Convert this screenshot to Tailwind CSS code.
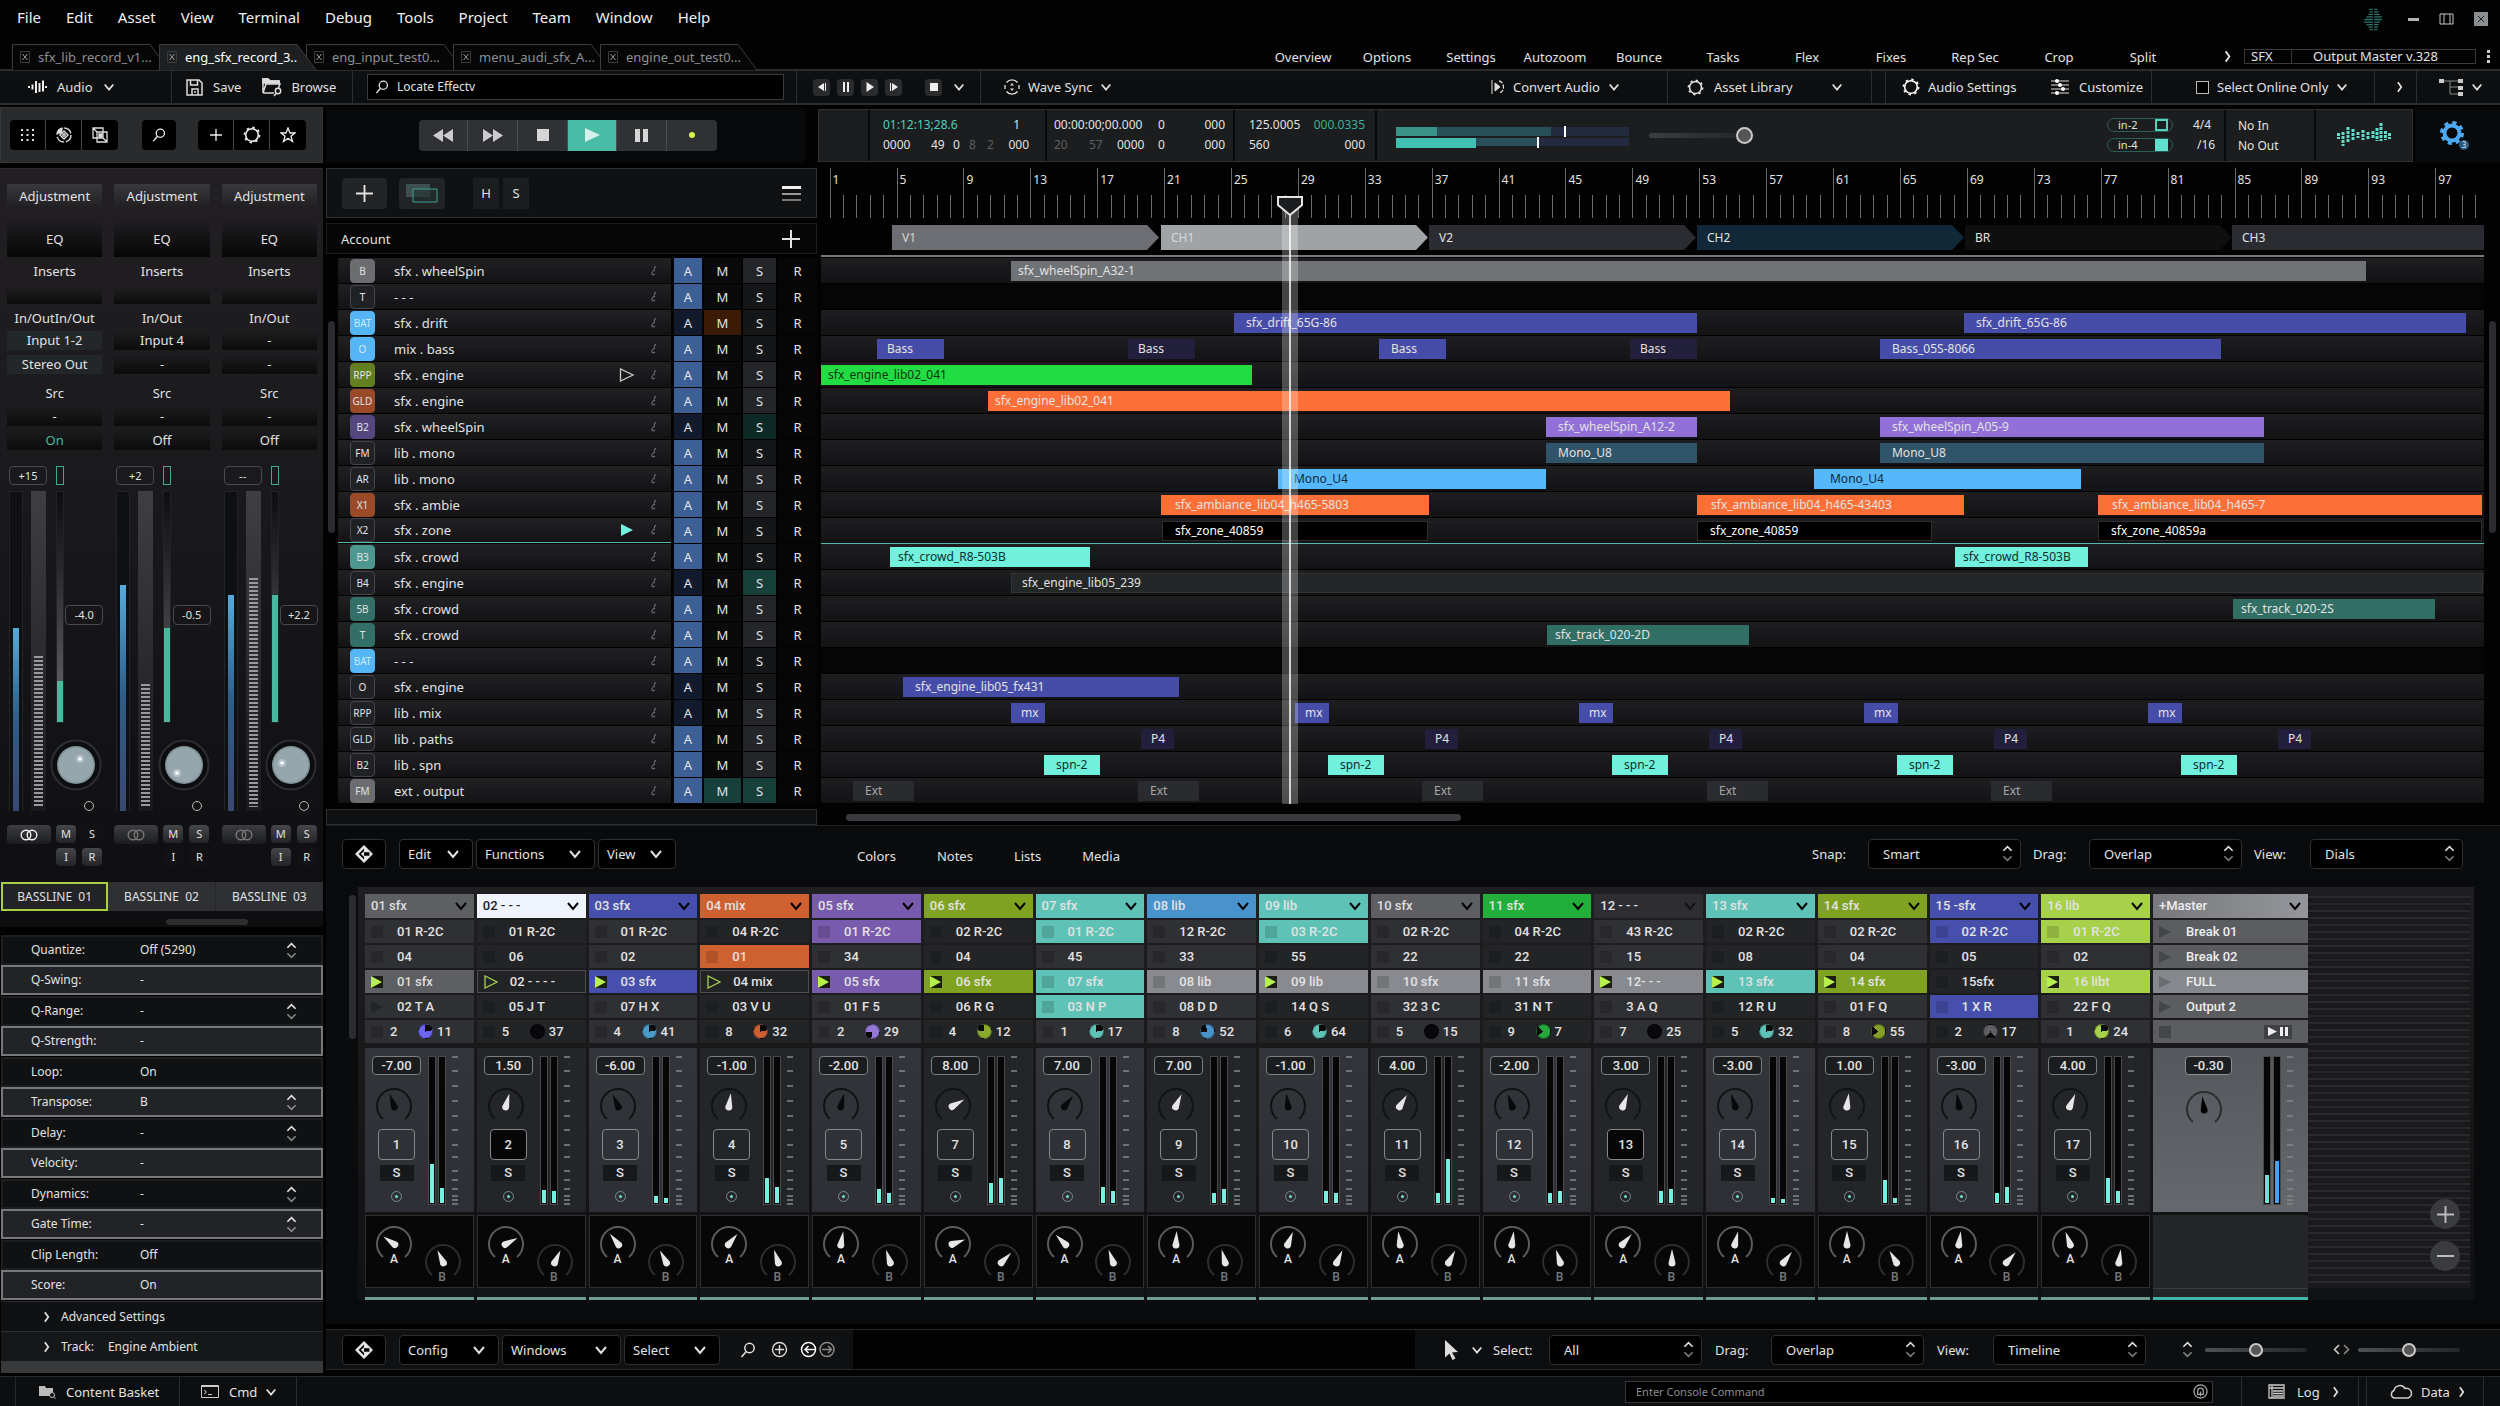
<!DOCTYPE html>
<html lang="en">
<head>
  <meta charset="UTF-8">
  <meta name="viewport" content="width=device-width, initial-scale=1.0">
  <title>SFX Workstation</title>
  <script src="https://cdn.jsdelivr.net/npm/@tailwindcss/browser@4"></script>
</head>

<body class="min-h-screen flex flex-col bg-[#020203] text-[#e2e2e2] text-[13px] leading-4 font-['Noto_Sans',sans-serif] overflow-x-hidden">

  <!-- Icon sprite -->
  <svg class="hidden">
    <symbol id="chev" viewBox="0 0 14 10"><path d="M2 2l5 6 5-6" fill="none" stroke="currentColor" stroke-width="2"/></symbol>
    <symbol id="chev-r" viewBox="0 0 8 14"><path d="M1.500 1.500l4 5.500-4 5.500" fill="none" stroke="currentColor" stroke-width="2"/></symbol>
    <symbol id="updown" viewBox="0 0 12 18"><path d="M1.500 6L6 1.500 10.500 6" fill="none" stroke="currentColor" stroke-width="1.800"/><path d="M1.500 12L6 16.500 10.500 12" fill="none" stroke="currentColor" stroke-opacity=".55" stroke-width="1.800"/></symbol>
    <symbol id="plus" viewBox="0 0 18 18"><path d="M9 0v18M0 9h18" fill="none" stroke="currentColor" stroke-width="2"/></symbol>
    <symbol id="mag" viewBox="0 0 16 16"><circle cx="9.500" cy="6" r="4.700" fill="none" stroke="currentColor" stroke-width="1.500"/><path d="M6.300 9.500L1.500 15" stroke="currentColor" stroke-width="1.600"/></symbol>
    <symbol id="cog" viewBox="0 0 18 18"><circle cx="9" cy="9" r="6.300" fill="none" stroke="currentColor" stroke-width="1.600"/><circle cx="9" cy="9" r="7.600" fill="none" stroke="currentColor" stroke-width="1.600" stroke-dasharray="2.400 3.570"/></symbol>
    <symbol id="diamond" viewBox="0 0 20 20"><path d="M10 0l10 10-10 10L0 10z" fill="#e4e4e4"/><path d="M10 4v4h6v4h-6v4l-6-6z" fill="#000"/><path d="M10 7v6l-3.500-3z" fill="#e4e4e4"/></symbol>
    <symbol id="link" viewBox="0 0 20 12"><circle cx="7" cy="6" r="4.800" fill="none" stroke="currentColor" stroke-width="1.400"/><circle cx="13" cy="6" r="4.800" fill="none" stroke="currentColor" stroke-width="1.400"/></symbol>
  </svg>

  <!-- Menu bar -->
  <header class="flex items-center justify-between h-[42px] pl-[5px] pr-3">
    <nav class="flex gap-px text-[15px] text-[#f0f0f0] pb-2" id="menuBar"></nav>
    <div class="flex items-center gap-5 pb-1">
      <svg class="w-[29px] h-[23px] text-[#2c7469]" viewBox="0 0 32 36" stroke="currentColor" stroke-width="2"><path d="M9 2h6M17 2h5M10 6h5M17 6h7M8 10h7M17 10h9M5 14h10M17 14h12M2 18h13M17 18h12M1 22h14M17 22h9M5 26h10M17 26h7M8 30h7M17 30h6M10 34h5M17 34h5"/></svg>
      <button class="w-[11px] h-[3px] bg-[#b5b5b5]" aria-label="Minimize"></button>
      <button aria-label="Restore" class="block"><svg class="w-[15px] h-3" viewBox="0 0 15 12" fill="none" stroke="#c5c5c5"><path d="M1 1h13v10H1zM5 1v10M11 1v10"/></svg></button>
      <button aria-label="Close" class="block"><svg class="w-[14px] h-[14px]" viewBox="0 0 14 14"><path d="M0 0h14v14H0z" fill="#8b8e90"/><path d="M4 4l6 6M10 4l-6 6" stroke="#222"/></svg></button>
    </div>
  </header>

  <!-- Document tabs -->
  <div class="flex items-end h-[27px] pl-3">
    <div class="flex" id="docTabs"></div>
    <div class="flex-1"></div>
    <div class="flex items-center h-[25px]">
      <div class="flex text-center" id="viewLinks"></div>
      <button class="ml-[39px] mr-3" aria-label="More views"><svg class="w-2 h-[13px]"><use href="#chev-r"/></svg></button>
      <div class="flex border border-[#3a3a3c] h-[15px] leading-[13px] w-[232px]">
        <span class="w-[47px] pl-1.5 border-r border-[#3a3a3c]">SFX</span><span class="flex-1 text-center pr-4">Output Master v.328</span>
      </div>
      <button class="w-6 grid place-items-center gap-0.5" aria-label="More options"><span class="size-[3px] bg-[#ccc]"></span><span class="size-[3px] bg-[#ccc]"></span><span class="size-[3px] bg-[#ccc]"></span></button>
    </div>
  </div>

  <!-- Main toolbar -->
  <div class="flex items-stretch h-9 bg-gradient-to-b from-[#0e1011] to-[#0b0d0e] border-t-2 border-b-2 border-[#2b2c2e]">
    <button class="flex items-center gap-2.5 w-[172px] pl-7 border-r border-[#2c2d2f]">
      <svg class="w-[19px] h-4" viewBox="0 0 19 16" stroke="#eee" stroke-width="2"><path d="M1 7v2M4.500 5.500v5M8 2v12M11.500 4v9M15 1.500v11M18 7v2"/></svg>Audio
      <svg class="w-3 h-2.5"><use href="#chev"/></svg>
    </button>
    <div class="flex items-center w-[181px] pl-[14px] border-r border-[#2c2d2f]">
      <button class="flex items-center gap-2.5"><svg class="w-[17px] h-[17px]" viewBox="0 0 17 17" fill="none" stroke="#ddd" stroke-width="1.500"><path d="M1 1h12l3 3v12H1zM4.500 1v5h7V1M6 16v-6h6v6M9 12v2"/></svg>Save</button>
      <button class="flex items-center gap-2 ml-5"><svg class="w-[22px] h-5" viewBox="0 0 22 20" fill="none" stroke="#ddd" stroke-width="1.500"><path d="M2 16V2h5l2 2h9v3M2 16h11M2 16l3-9h14l-2 5"/><path d="M2 2h5l2 2h9v2H2z" fill="#ddd"/><circle cx="17" cy="14" r="2.700"/><path d="M15.500 16L13 19"/></svg>Browse</button>
    </div>
    <div class="flex items-center pl-[14px] pr-3 w-[444px] border-r border-[#2c2d2f]">
      <label class="flex items-center gap-2 w-full h-[26px] px-[7px] bg-black border border-[#3a3b3d]"><svg class="size-3.5 shrink-0"><use href="#mag"/></svg><input class="flex-1 bg-transparent outline-none text-[12px]" aria-label="Locate" value="Locate Effectv"></label>
    </div>
    <div class="flex items-center gap-[7px] w-[184px] pl-4 border-r border-[#2c2d2f]">
      <button aria-label="Previous" class="w-[17px] h-[17px] rounded bg-[#2a2b2d] grid place-items-center"><svg class="size-2.5" viewBox="0 0 10 10" fill="#eee"><path d="M7 1v8L1 5zM8 1h1v8H8z"/></svg></button>
      <button aria-label="Pause preview" class="w-[17px] h-[17px] rounded bg-[#2a2b2d] grid place-items-center"><svg class="size-2.5" viewBox="0 0 10 10" fill="#eee"><path d="M2 0h2v10H2zM6 0h2v10H6z"/></svg></button>
      <button aria-label="Play preview" class="w-[17px] h-[17px] rounded bg-[#2a2b2d] grid place-items-center"><svg class="size-2.5" viewBox="0 0 10 10" fill="#eee"><path d="M1.500 0v10L9 5z"/></svg></button>
      <button aria-label="Next" class="w-[17px] h-[17px] rounded bg-[#2a2b2d] grid place-items-center"><svg class="size-2.5" viewBox="0 0 10 10" fill="#eee"><path d="M3 1v8l6-4zM1 1h1v8H1z"/></svg></button>
      <button aria-label="Stop preview" class="w-[17px] h-[17px] ml-4 rounded bg-[#2a2b2d] grid place-items-center"><span class="size-2 bg-[#eee]"></span></button>
      <button aria-label="Preview menu" class="ml-1"><svg class="w-3 h-2.5"><use href="#chev"/></svg></button>
    </div>
    <button class="flex items-center gap-2 pl-[23px]"><svg class="size-4" viewBox="0 0 16 16" fill="none" stroke="#ddd" stroke-width="1.300"><path d="M13.500 3.500a7 7 0 0 0-11 0M2.500 12.500a7 7 0 0 0 11 0M1 6v4M15 6v4"/><path d="M8 4l2 2.500H6zM8 12l2-2.500H6z" fill="#ddd" stroke="none"/></svg>Wave Sync<svg class="w-3 h-2.5"><use href="#chev"/></svg></button>
    <div class="flex-1"></div>
    <button class="flex items-center gap-2 pr-[47px] border-r border-[#2c2d2f]"><svg class="w-[14px] h-[14px]" viewBox="0 0 14 14" fill="none" stroke="#ddd"><path d="M1 0v14"/><path d="M4 3v8l5-4z" fill="#ddd"/><path d="M8 1c6 1 6 11 0 12" stroke-width="1.300" stroke-dasharray="4 1.500"/></svg>Convert Audio<svg class="w-3 h-2.5"><use href="#chev"/></svg></button>
    <button class="flex items-center w-[204px] pl-[19px] border-r border-[#2c2d2f]"><svg class="w-[17px] h-[17px] mr-2.5"><use href="#cog"/></svg>Asset Library<svg class="w-3 h-2.5 ml-auto mr-7"><use href="#chev"/></svg></button>
    <div class="w-[14px] border-r border-[#2c2d2f]"></div>
    <div class="flex items-center w-[266px] pl-4 border-r border-[#2c2d2f]">
      <button class="flex items-center gap-2"><svg class="w-[18px] h-[18px] text-white"><use href="#cog"/></svg>Audio Settings</button>
      <button class="flex items-center gap-2.5 ml-auto mr-2"><svg class="w-[18px] h-4" viewBox="0 0 18 16" stroke="#999" stroke-width="1.500"><path d="M0 2h18M0 6h18M0 10h18M0 14h18"/><g fill="#fff" stroke="none"><circle cx="6" cy="2" r="2"/><circle cx="9" cy="6" r="2"/><circle cx="12" cy="10" r="2"/><circle cx="6" cy="14" r="2"/></g></svg>Customize</button>
    </div>
    <div class="flex items-center w-[223px] pl-11 gap-2 border-r border-[#2c2d2f]">
      <input type="checkbox" id="onlineOnly" class="appearance-none w-[13px] h-[13px] border border-[#bbb] bg-black"><label for="onlineOnly">Select Online Only</label><svg class="w-3 h-2.5"><use href="#chev"/></svg>
    </div>
    <button class="w-[42px] pl-2 grid place-items-center border-r border-[#2c2d2f]" aria-label="Expand toolbar"><svg class="w-2 h-3"><use href="#chev-r"/></svg></button>
    <button class="w-[83px] flex items-center gap-2 pl-[22px]" aria-label="Node tree"><svg class="w-6 h-[17px]" viewBox="0 0 24 17"><path d="M3 2h16M11 2v13h8M11 8h8" fill="none" stroke="#888"/><path d="M0 0h5v4H0zM19 0h5v4h-5zM19 7h5v4h-5zM19 13h5v4h-5z" fill="#ccc"/></svg><svg class="w-3 h-2.5"><use href="#chev"/></svg></button>
  </div>

  <div class="flex flex-1 pt-0.5">

    <!-- Left sidebar -->
    <aside class="w-[323px] shrink-0 flex flex-col">
      <div class="h-14 bg-[#2a2b2d] border border-[#353638] flex items-center pl-[9px] text-[#eee]">
        <div class="flex bg-black rounded divide-x divide-[#444] h-[30px]">
          <button class="w-9 grid place-items-center" aria-label="Grid"><svg class="w-[14px] h-3" viewBox="0 0 14 12" stroke="#ddd" stroke-width="2" stroke-dasharray="2 3.500"><path d="M0 1h14M0 6h14M0 11h14"/></svg></button>
          <button class="w-9 grid place-items-center" aria-label="Swirl"><svg class="size-4" viewBox="0 0 16 16" fill="none" stroke="#ddd" stroke-width="1.400"><circle cx="8" cy="8" r="7" stroke-dasharray="9 2"/><path d="M8 4l4 4-4 4-4-4z"/><circle cx="8" cy="8" r="1.200"/><path d="M1.500 6A7 7 0 0 1 6 1.500L5 6z" fill="#ddd"/></svg></button>
          <button class="w-9 grid place-items-center" aria-label="Layers"><svg class="size-4" viewBox="0 0 16 16" fill="none" stroke="#ddd" stroke-width="1.300"><path d="M1 1h10v10H1zM5 5h10v10H5zM1 1l4 4M11 11l4 4"/><path d="M7 7h3v3H7z" fill="#ddd"/></svg></button>
        </div>
        <button class="w-[34px] h-[30px] ml-6 bg-black rounded grid place-items-center" aria-label="Search"><svg class="size-[14px]"><use href="#mag"/></svg></button>
        <div class="flex bg-black rounded divide-x divide-[#444] h-[30px] ml-[22px]">
          <button class="w-9 grid place-items-center" aria-label="Add"><svg class="size-3"><use href="#plus"/></svg></button>
          <button class="w-9 grid place-items-center" aria-label="Settings"><svg class="size-[18px]"><use href="#cog"/></svg></button>
          <button class="w-9 grid place-items-center" aria-label="Favourite"><svg class="size-4" viewBox="0 0 16 16" fill="none" stroke="#eee" stroke-width="1.300"><path d="M8 1l2 5h5l-4 3.200 1.500 5.300L8 11.300 3.500 14.500 5 9.200 1 6h5z"/></svg></button>
        </div>
      </div>

      <div class="mt-[5px] h-[759px] bg-gradient-to-b from-[#221f22] via-[#18181a] to-[#0e0e10] border-t border-[#2a282a] flex flex-col">
        <div class="grid grid-cols-3 flex-1 pl-px pt-[15px]" id="channelStrips"></div>
        <div class="grid grid-cols-3 pl-px text-center text-[12px]">
          <button class="h-[29px] bg-[#222326] border-2 border-[#a9cf45] whitespace-pre">BASSLINE  01</button>
          <button class="h-[29px] bg-[#2f3034] whitespace-pre border-r border-[#252629]">BASSLINE  02</button>
          <button class="h-[29px] bg-[#2f3034] whitespace-pre">BASSLINE  03</button>
        </div>
        <div class="h-4 pt-2"><div class="w-[82px] h-[6px] ml-[166px] rounded bg-[#2e2e31]"></div></div>
      </div>

      <div class="mt-2 ml-px text-[12px]" id="paramList"></div>
      <div class="h-3 ml-px bg-[#38393b]"></div>
    </aside>

    <!-- Right side -->
    <main class="flex-1 min-w-0 flex flex-col pl-[3px]">

      <!-- Transport and readouts -->
      <div class="flex h-14 items-center">
        <div class="w-[480px] h-14 bg-[#08090a] rounded-r-lg flex items-center pl-[93px]">
          <div class="flex divide-x divide-[#4a4b4d] rounded overflow-hidden h-[31px] bg-[#303134]">
            <button class="w-[49px] grid place-items-center" aria-label="Rewind"><svg class="w-5 h-[13px]" viewBox="0 0 20 13" fill="#ccc"><path d="M10 0v13L0 6.500zM20 0v13L10 6.500z"/></svg></button>
            <button class="w-[50px] grid place-items-center" aria-label="Forward"><svg class="w-5 h-[13px]" viewBox="0 0 20 13" fill="#ccc"><path d="M0 0v13l10-6.500zM10 0v13l10-6.500z"/></svg></button>
            <button class="w-[50px] grid place-items-center" aria-label="Stop"><span class="size-3 bg-[#d5d5d5]"></span></button>
            <button class="w-[49px] grid place-items-center bg-[#48bca6]" aria-label="Play"><svg class="w-[15px] h-[14px]" viewBox="0 0 15 14" fill="#d5f1ea"><path d="M0 0v14l15-7z"/></svg></button>
            <button class="w-[50px] grid place-items-center" aria-label="Pause"><svg class="w-[13px] h-[13px]" viewBox="0 0 13 13" fill="#d5d5d5"><path d="M0 0h5v13H0zM8 0h5v13H8z"/></svg></button>
            <button class="w-[50px] grid place-items-center" aria-label="Record"><span class="size-1.5 rounded-full bg-[#d7f04c]"></span></button>
          </div>
        </div>
        <div class="flex-1 ml-3 mr-0.5 h-[53px] bg-[#1b1d1e] border border-[#2e3032] flex divide-x-2 divide-[#08090a] text-[12px] leading-5">
          <div class="w-[51px]"></div>
          <div class="w-[177px] pl-[13px] pr-4 pt-[5px]">
            <div class="flex justify-between"><span class="text-[#4fd0bb]">01:12:13;28.6</span><span class="pr-[9px]">1</span></div>
            <div class="flex"><span class="w-12">0000</span><span class="w-[22px]">49</span><span class="w-4">0</span><span class="w-[18px] text-[#5c5e60]">8</span><span class="flex-1 text-[#5c5e60]">2</span><span>000</span></div>
          </div>
          <div class="w-[188px] pl-[7px] pr-2 pt-[5px]">
            <div class="flex"><span class="w-[104px]">00:00:00;00.000</span><span class="flex-1">0</span><span>000</span></div>
            <div class="flex"><span class="w-[35px] text-[#5c5e60]">20</span><span class="w-7 text-[#5c5e60]">57</span><span class="w-[41px]">0000</span><span class="flex-1">0</span><span>000</span></div>
          </div>
          <div class="w-[142px] pl-3.5 pr-2.5 pt-[5px]">
            <div class="flex justify-between"><span>125.0005</span><span class="text-[#3fb09b]">000.0335</span></div>
            <div class="flex justify-between"><span>560</span><span>000</span></div>
          </div>
          <div class="flex-1 flex items-center pl-[19px]">
            <svg class="w-[233px] h-[26px]" viewBox="0 0 233 26"><path d="M0 5h233v9H0zM0 14h233v10H0z" fill="#242b40"/><path d="M0 5h155v9H0zM0 14h142v10H0z" fill="#29505a"/><path d="M0 5h41v9H0z" fill="#3a9389"/><path d="M0 16h80v10H0z" fill="#42beb3"/><path d="M0 14h233v2H0zM0 0h233v5H0z" fill="#1b1d1e"/><path d="M168 4h2v11h-2zM141 15h2v11h-2z" fill="#fff"/></svg>
            <input type="range" aria-label="Master level" value="98" class="appearance-none w-[106px] h-[5px] ml-5 rounded bg-gradient-to-r from-[#3c3d40] to-[#222325] [&::-webkit-slider-thumb]:appearance-none [&::-webkit-slider-thumb]:size-[17px] [&::-webkit-slider-thumb]:rounded-full [&::-webkit-slider-thumb]:border-2 [&::-webkit-slider-thumb]:border-[#c9c9c9] [&::-webkit-slider-thumb]:bg-[#555]">
            <div class="flex-1"></div>
            <div class="grid gap-1.5 mr-5">
              <label class="flex items-center justify-between w-[66px] h-[14px] rounded-full border border-[#2b5e57] pl-2.5 pr-1 text-[11px] leading-3">in-2<input type="checkbox" class="appearance-none w-[13px] h-[12px] border-2 border-[#55d0bf]"></label>
              <label class="flex items-center justify-between w-[66px] h-[14px] rounded-full border border-[#2b5e57] pl-2.5 pr-1 text-[11px] leading-3">in-4<input type="checkbox" checked class="appearance-none w-[13px] h-[12px] bg-[#5fe0cf]"></label>
            </div>
            <div class="w-[31px]"><div>4/4</div><div class="pl-1">/16</div></div>
          </div>
          <div class="w-[90px] pl-3 pt-[6px]"><div>No In</div><div>No Out</div></div>
          <div class="w-[96px] grid place-items-center"><svg class="w-[54px] h-6 text-[#62dccb]" viewBox="0 0 54 24" stroke="currentColor" stroke-width="3" stroke-dasharray="3 1"><path d="M1.500 10v6M6 9v14M11 4v15M16 6v11M21 9v6M26 7v10M31 9v7M36 8v8M40 5v13M44 0v18M48.500 8v9M52.500 10v6"/></svg></div>
        </div>
        <div class="w-[85px] h-14 bg-[#08090a] flex items-center">
          <button class="relative ml-6 mb-1" aria-label="Preferences">
            <svg class="size-[26px]" viewBox="0 0 26 26" fill="none" stroke="#4da9ef"><circle cx="13" cy="13" r="7.500" stroke-width="4"/><circle cx="13" cy="13" r="10" stroke-width="4" stroke-dasharray="4 3.854"/></svg>
            <span class="absolute -right-1 -bottom-1 size-2.5 rounded-full bg-[#275d86] text-[8px] leading-[10px] text-center">3</span>
          </button>
        </div>
      </div>

      <!-- Arranger -->
      <div class="flex mt-[5px]">
        <section class="w-[491px] shrink-0">
          <div class="flex items-center h-[50px] bg-[#0f1112] border border-[#303234] pl-[15px] pr-[15px]">
            <button class="w-[45px] h-[31px] bg-[#222426] rounded-sm grid place-items-center" aria-label="Add track"><svg class="size-[17px]"><use href="#plus"/></svg></button>
            <button class="w-[46px] h-[31px] ml-3 bg-[#222426] rounded-sm grid place-items-center" aria-label="Duplicate track"><svg class="w-8 h-[19px]" viewBox="0 0 32 19"><path d="M0 0h24v13H0z" fill="#3d4f4e"/><path d="M7 5h24v13H7z" fill="#22302f" fill-opacity=".6" stroke="#3ca090"/></svg></button>
            <button class="w-[26px] h-[31px] ml-7 bg-[#1b1d1f]">H</button>
            <button class="w-[26px] h-[31px] ml-1 bg-[#1b1d1f]">S</button>
            <button class="ml-auto grid gap-1 w-[19px]" aria-label="Track menu"><span class="h-[3px] bg-[#eee]"></span><span class="h-0.5 bg-[#999]"></span><span class="h-0.5 bg-[#777]"></span></button>
          </div>
          <div class="flex items-center justify-between h-[31px] mt-[5px] mb-px bg-[#060607] border border-[#1c1d1f] pl-[14px] pr-[16px]">
            <span>Account</span><button aria-label="Add account"><svg class="size-[18px] block"><use href="#plus"/></svg></button>
          </div>
          <div class="flex pt-[3px]">
            <div class="w-3 pl-0.5"><div class="w-[7px] mt-[63px] h-[212px] rounded bg-[#2b2c2f]"></div></div>
            <div class="flex-1" id="trackList"></div>
          </div>
          <div class="mt-[5px] h-4 bg-[#0f1112] border border-[#2a2c2d]"></div>
        </section>

        <section class="flex-1 min-w-0 pl-1">
          <div class="relative overflow-hidden">
            <div class="relative h-[50px] text-[12px]" id="ruler"></div>
            <div class="relative h-8 mt-[7px] border-b-2 border-[#77797b] mb-px" id="markers"></div>
            <div id="lanes"></div>
            <div class="absolute top-[42px] bottom-0 w-4 bg-white/25 flex justify-center" id="playhead"><span class="w-0.5 bg-white/75"></span></div>
            <svg class="absolute top-7 w-[26px] h-5" id="playheadGrip" viewBox="0 0 26 20"><path d="M1 1h24v8L13 19 1 9z" fill="#1c1d1f" stroke="#e5e5e5" stroke-width="2"/></svg>
          </div>
          <div class="mt-2.5 h-[7px] w-[37%] ml-[25px] rounded bg-[#3a3b3e]"></div>
        </section>
        <div class="w-4 shrink-0 pl-[5px] pt-[153px]"><div class="w-[7px] h-[212px] rounded bg-[#2b2c2f]"></div></div>
      </div>

      <!-- Session mixer -->
      <section class="bg-[#0a0b0c] border-t border-[#1f2122] pb-6">
        <div class="flex items-center h-[30px] mt-[13px] pl-4 pr-[37px]">
          <button class="w-11 h-[30px] bg-black border border-[#2d2f31] rounded-sm grid place-items-center" aria-label="Navigator"><svg class="size-[18px]"><use href="#diamond"/></svg></button>
          <div class="flex gap-[3px] ml-[13px]" id="mixerMenus"></div>
          <nav class="flex gap-[41px] ml-[181px] pt-1">
            <a href="#">Colors</a><a href="#">Notes</a><a href="#">Lists</a><a href="#">Media</a>
          </nav>
          <div class="flex-1"></div>
          <div class="flex gap-3" id="mixerSelects"></div>
        </div>
        <div class="flex mt-[18px] pl-[23px] pr-[26px]">
          <div class="w-[7px] h-[144px] mt-2 mr-0.5 rounded bg-[#2b2c2f]"></div>
          <div class="flex-1 flex bg-gradient-to-b from-[#1f1e20] to-[#101112] pt-[7px] pl-[7px]">
            <div class="flex-1 grid grid-cols-16 font-[Roboto,'Noto_Sans',sans-serif] font-medium" id="mixerCols"></div>
            <div class="w-[155px] font-[Roboto,'Noto_Sans',sans-serif] font-medium">
              <div class="grid gap-0.5 text-[#eee]">
                <button class="flex items-center justify-between h-6 px-[6px] bg-gradient-to-r from-[#77797d] to-[#94969b]">+Master<svg class="w-[14px] h-2.5 text-black"><use href="#chev"/></svg></button>
                <button class="flex items-center gap-[15px] h-[23px] pl-[6px] bg-[#5b5d60]"><svg class="size-3" viewBox="0 0 12 12"><path d="M0 0v12l12-6z" fill="#444649"/></svg>Break 01</button>
                <button class="flex items-center gap-[15px] h-[23px] pl-[6px] bg-[#5b5d60]"><svg class="size-3" viewBox="0 0 12 12"><path d="M0 0v12l12-6z" fill="#444649"/></svg>Break 02</button>
                <button class="flex items-center gap-[15px] h-[23px] pl-[6px] bg-[#85888d]"><svg class="size-3" viewBox="0 0 12 12"><path d="M0 0v12l12-6z" fill="#6a6c70"/></svg>FULL</button>
                <button class="flex items-center gap-[15px] h-[23px] pl-[6px] bg-[#5b5d60]"><svg class="size-3" viewBox="0 0 12 12"><path d="M0 0v12l12-6z" fill="#444649"/></svg>Output 2</button>
                <div class="flex items-center justify-between h-[23px] px-[6px] bg-[#5b5d60]"><span class="size-3 bg-[#444649]"></span><button aria-label="Play or pause master" class="mr-2.5 w-7 h-[14px] bg-[#3e4043] grid place-items-center"><svg class="w-5 h-[9px]" viewBox="0 0 20 9" fill="#eee"><path d="M0 0v9l9-4.500zM12 0h3v9h-3zM17 0h3v9h-3z"/></svg></button></div>
              </div>
              <div class="mt-[5px] h-[164px] bg-gradient-to-b from-[#54575b] to-[#65686c] flex pt-2 pl-8">
                <div class="w-[47px]">
                  <div class="h-[19px] leading-[17px] text-center bg-[#1d1e20] border border-[#8a8c8f] rounded-sm">-0.30</div>
                  <svg class="size-10 mt-[14px] -ml-px mr-auto" viewBox="0 0 40 40"><path d="M9 33A17 17 0 1 1 31 33" fill="none" stroke="#2b2d2f" stroke-width="2"/><path d="M20 7l3.500 14a3.500 3.500 0 0 1-7 0z" transform="rotate(-8 20 20)"/></svg>
                </div>
                <div class="flex gap-[2px] ml-[31px] h-[150px]" id="masterMeter"></div>
              </div>
              <div class="mt-[3px] h-[82px] bg-[#242527] flex flex-col justify-end"><div class="h-[9px] border-t border-[#3c3d3f]"></div></div>
              <div class="h-[3px] bg-[#3fb8ae]"></div>
            </div>
            <div class="w-[166px] pt-0.5 flex flex-col relative">
              <div class="h-[392px] w-[162px] bg-[repeating-linear-gradient(to_bottom,#29272a_0,#29272a_2px,#1a1a1c_2px,#1a1a1c_7px)]"></div>
              <div class="absolute right-[14px] bottom-[29px] grid gap-3 text-[#bbb]">
                <button class="size-[30px] rounded-full bg-[#3a3b3e] grid place-items-center" aria-label="Zoom in"><svg class="size-[17px]"><use href="#plus"/></svg></button>
                <button class="size-[30px] rounded-full bg-[#3a3b3e] grid place-items-center" aria-label="Zoom out"><span class="w-[17px] h-0.5 bg-[#bbb]"></span></button>
              </div>
            </div>
          </div>
        </div>
      </section>

      <!-- Lower toolbar -->
      <div class="flex mt-[5px] h-[41px] border-y border-[#26282a]">
        <div class="flex items-center w-[527px] pl-4 bg-[#0f1112]">
          <button class="w-11 h-[30px] bg-black border border-[#2d2f31] rounded-sm grid place-items-center" aria-label="Navigator"><svg class="size-[18px]"><use href="#diamond"/></svg></button>
          <div class="flex gap-[3px] ml-[13px]" id="lowerMenus"></div>
          <button class="ml-5" aria-label="Find"><svg class="size-4"><use href="#mag"/></svg></button>
          <button class="ml-[15px]" aria-label="Zoom"><svg class="size-[17px]" viewBox="0 0 17 17" fill="none" stroke="#ddd" stroke-width="1.400"><circle cx="8.500" cy="8.500" r="7"/><path d="M8.500 4v9M4 8.500h9"/></svg></button>
          <button class="ml-3" aria-label="Step"><svg class="w-9 h-[17px]" viewBox="0 0 36 17" fill="none" stroke-width="1.500"><g stroke="#888"><circle cx="27" cy="8.500" r="7"/><path d="M22 8.500h9M28 5l3.500 3.500L28 12"/></g><g stroke="#fff"><circle cx="8.500" cy="8.500" r="7"/><path d="M16 8.500H5M8.500 5L5 8.500 8.500 12"/></g></svg></button>
        </div>
        <div class="flex-1 bg-[#030304]"></div>
        <div class="flex items-center w-[1085px] pl-[29px] bg-[#0c0e0f]">
          <svg class="w-[15px] h-5" viewBox="0 0 15 20" fill="#ddd"><path d="M1 0l13 12-6 .5 3.500 6-3 1.500-3-6.500-4.500 4z"/></svg>
          <svg class="w-3 h-2.5 ml-3 mr-[10px]"><use href="#chev"/></svg>
          <div class="flex gap-[13px]" id="lowerSelects"></div>
          <svg class="w-[11px] h-[17px] ml-9"><use href="#updown"/></svg>
          <input type="range" aria-label="Vertical zoom" value="50" class="appearance-none w-[102px] h-1 ml-3 rounded bg-gradient-to-r from-[#505155] to-[#242528] [&::-webkit-slider-thumb]:appearance-none [&::-webkit-slider-thumb]:size-[14px] [&::-webkit-slider-thumb]:rounded-full [&::-webkit-slider-thumb]:border-2 [&::-webkit-slider-thumb]:border-[#c9c9c9] [&::-webkit-slider-thumb]:bg-[#555]">
          <svg class="w-[17px] h-[11px] ml-[26px]" viewBox="0 0 17 11" fill="none" stroke="#ccc" stroke-width="1.600"><path d="M6 1L1.500 5.500 6 10"/><path d="M11 1l4.500 4.500L11 10" stroke="#888"/></svg>
          <input type="range" aria-label="Horizontal zoom" value="50" class="appearance-none w-[102px] h-1 ml-2 rounded bg-gradient-to-r from-[#505155] to-[#242528] [&::-webkit-slider-thumb]:appearance-none [&::-webkit-slider-thumb]:size-[14px] [&::-webkit-slider-thumb]:rounded-full [&::-webkit-slider-thumb]:border-2 [&::-webkit-slider-thumb]:border-[#c9c9c9] [&::-webkit-slider-thumb]:bg-[#555]">
        </div>
      </div>
    </main>
  </div>

  <!-- Status bar -->
  <footer class="flex items-stretch mt-[3px] h-[31px] bg-[#0c0e0f] border-y border-[#26282a]">
    <div class="w-4 border-r border-[#26282a]"></div>
    <button class="flex items-center gap-2.5 w-[164px] pl-[23px] border-r border-[#2a2c2e]"><svg class="w-[17px] h-[15px]" viewBox="0 0 17 15"><path d="M0 2h6l1 2h7v8H0z" fill="#bbb"/><circle cx="13" cy="11" r="2.500" fill="#111" stroke="#bbb"/><path d="M14.500 13l2 2" stroke="#bbb"/></svg>Content Basket</button>
    <button class="flex items-center gap-2.5 w-[117px] pl-[21px] border-r border-[#2a2c2e]"><svg class="w-[18px] h-[13px]" viewBox="0 0 18 13" fill="none" stroke="#ccc"><path d="M.5.500h17v12H.500z"/><path d="M.5 1.500h17M3 5l2.500 2L3 9M7 9.500h4"/></svg>Cmd<svg class="w-3 h-2.5 -ml-0.5"><use href="#chev"/></svg></button>
    <div class="flex-1"></div>
    <label class="flex items-center self-center w-[588px] h-[22px] pl-2.5 pr-1 bg-black border border-[#35373a]">
      <input class="flex-1 bg-transparent outline-none text-[11px] text-[#8c8e90] placeholder-[#8c8e90]" aria-label="Console" placeholder="Enter Console Command">
      <svg class="size-[15px]" viewBox="0 0 16 16" fill="none" stroke="#aaa" stroke-width="1.300"><circle cx="8" cy="8" r="7"/><path d="M5 11V7.500a3 3 0 0 1 6 0V11zM8 8v5"/></svg>
    </label>
    <button class="flex items-center w-[118px] ml-7 pl-[26px] border-x border-[#2a2c2e]"><svg class="w-[17px] h-[15px] mr-3" viewBox="0 0 17 15" fill="none" stroke="#ccc"><path d="M1 1h15v13H1zM4 1v13M1 4h15M5 7h10M5 9.500h10M5 12h10" stroke-width="1.300"/></svg>Log<svg class="w-2 h-3 ml-3"><use href="#chev-r"/></svg></button>
    <button class="flex items-center w-[118px] ml-[7px] pl-[22px] border-x border-[#2a2c2e]"><svg class="w-6 h-[15px] mr-2" viewBox="0 0 24 15" fill="none" stroke="#ccc" stroke-width="1.500"><path d="M5 14a4 4 0 0 1 0-7.500 6 6 0 0 1 11-2A4.500 4.500 0 0 1 19 14z"/></svg>Data<svg class="w-2 h-3 ml-2"><use href="#chev-r"/></svg></button>
    <div class="w-4"></div>
  </footer>

  <script>
    const el = id => document.getElementById(id);
    const fill = (id, items, tpl) => { el(id).innerHTML = items.map(tpl).join(''); };

    fill('menuBar', ['File', 'Edit', 'Asset', 'View', 'Terminal', 'Debug', 'Tools', 'Project', 'Team', 'Window', 'Help'],
      t => `<button class="px-3">${t}</button>`);

    fill('docTabs', ['sfx_lib_record_v1...', 'eng_sfx_record_3..', 'eng_input_test0...', 'menu_audi_sfx_A...', 'engine_out_test0...'], (t, i) => `
      <button class="relative w-[147px] h-[25px] flex items-center gap-2 pl-2 ${i === 1 ? 'text-white z-10' : 'text-[#8f9092]'}">
        <svg class="absolute left-0 top-0 w-[160px] h-[26px]" viewBox="0 0 160 26"><path d="M.5 26V.5H138L157 26" fill="${i === 1 ? '#1e1f21' : '#060607'}" stroke="#3c3d40"/></svg>
        <svg class="relative w-2.5 h-3 shrink-0" viewBox="0 0 10 12"><path d="M.5.500h9v11h-9z" fill="none" stroke="#3a3b3d"/><path d="M2.500 3l5 6M7.500 3l-5 6" stroke="#999"/></svg>
        <span class="relative">${t}</span>
      </button>`);

    fill('viewLinks', ['Overview', 'Options', 'Settings', 'Autozoom', 'Bounce', 'Tasks', 'Flex', 'Fixes', 'Rep Sec', 'Crop', 'Split'],
      t => `<a href="#" class="w-[84px]">${t}</a>`);

    // Left channel strips: blue level, ladder start and green level are measured from the top of the meter
    const strips = [
      { io: 'In/OutIn/Out', a: 'Input 1-2', b: 'Stereo Out', lit: 1, sw: 'On', gain: '+15', vol: '-4.0', blue: 136, ladder: 165, green: 189, dot: [24, 14], on: 'MIR' },
      { io: 'In/Out', a: 'Input 4', b: '-', sw: 'Off', gain: '+2', vol: '-0.5', blue: 93, ladder: 193, green: 136, dot: [13, 28], on: 'MS' },
      { io: 'In/Out', a: '-', b: '-', sw: 'Off', gain: '--', vol: '+2.2', blue: 103, ladder: 87, green: 103, dot: [11, 18], on: 'MSI' },
    ];
    const slot = (t, cls) => `<div class="h-[19px] leading-[19px] ${cls}">${t}</div>`;
    const dark = 'bg-gradient-to-b from-transparent to-[#0b0b0c]';
    fill('channelStrips', strips, (s, i) => `
      <div class="px-[6px] text-center">
        <button class="block w-full h-6 bg-gradient-to-b from-[#38393c] to-transparent">Adjustment</button>
        <button class="block w-full h-[37px] mt-3 bg-gradient-to-b from-transparent to-[#060607]">EQ</button>
        <div class="mt-[6px]">Inserts</div>
        <div class="h-4 mt-[9px] ${dark}"></div>
        <div class="mt-[6px] mb-[5px]">${s.io}</div>
        ${slot(s.a, s.lit ? 'bg-[#232729]' : dark)}
        <div class="h-[5px]"></div>
        ${slot(s.b, s.lit ? 'bg-[#232729]' : dark)}
        <div class="mt-[11px] mb-[6px]">Src</div>
        ${slot('-', dark)}
        <div class="h-[5px]"></div>
        ${slot(s.sw, s.sw === 'On' ? 'bg-gradient-to-b from-transparent to-[#0b0b0c] text-[#49b89d]' : dark)}
        <div class="flex mt-4 pl-0.5 text-[11px]">
          <span class="w-[38px] h-[19px] leading-[17px] border border-[#4a4a4d] rounded-sm">${s.gain}</span>
          <span class="w-2 h-[19px] ml-[9px] border border-[#3fa88f]"></span>
        </div>
        <div class="relative flex h-[320px] mt-[6px] pl-0.5">
          <div class="w-[14px] px-[3px] bg-[#0f1011] border border-[#222325] border-b-0"><div class="h-full flex flex-col"><div style="height:${s.blue}px"></div><div class="flex-1 bg-gradient-to-b from-[#58abd9] via-[#2e5c86] to-[#3a4870]"></div></div></div>
          <div class="w-[15px] ml-2 px-[3px] pb-1 bg-gradient-to-b from-[#3f3f41] to-[#1a1a1c] flex flex-col"><div style="height:${s.ladder}px"></div><div class="flex-1 bg-[repeating-linear-gradient(to_bottom,#9a9a9c_0,#9a9a9c_2px,transparent_2px,transparent_4px)]"></div></div>
          <div class="w-2 h-[232px] ml-2.5 border border-[#222325] bg-gradient-to-b from-[#0e0e10] to-[#6a6a6c] flex flex-col"><div style="height:${s.green}px"></div><div class="flex-1 bg-[#48b89e]"></div></div>
          <span class="absolute -right-px top-[114px] w-[38px] h-[20px] leading-[18px] border border-[#4a4a4d] rounded-sm text-[11px] bg-[#161618]">${s.vol}</span>
          <svg class="absolute right-0 top-[248px] w-[52px] h-[52px]" viewBox="-6 -6 52 52"><circle cx="20" cy="20" r="24.500" fill="#0c0d0e" stroke="#2c2d2f" stroke-width="2"/><circle cx="20" cy="20" r="19" fill="#7f9096"/><circle cx="20" cy="20" r="17.500" fill="#95a6ac"/><circle cx="${s.dot[0]}" cy="${s.dot[1]}" r="4" fill="#c9d6da" fill-opacity=".6"/><circle cx="${s.dot[0]}" cy="${s.dot[1]}" r="1.800" fill="#fff"/></svg>
          <span class="absolute right-2 bottom-0 size-2.5 rounded-full border border-[#bbb]"></span>
        </div>
        <div class="flex mt-[14px] text-[11px]">
          <button class="w-11 h-[19px] bg-gradient-to-b from-[#3d3e41] to-[#1b1c1e] rounded-sm grid place-items-center ${i ? 'text-[#777]' : 'text-[#eee]'}" aria-label="Link stereo"><svg class="w-5 h-3"><use href="#link"/></svg></button>
          <div class="grid grid-cols-2 gap-x-[6px] gap-y-[5px] ml-[5px]">
            ${['M', 'S', 'I', 'R'].map(b => `<button class="w-5 h-[18px] rounded-sm ${s.on.includes(b) ? 'bg-gradient-to-b from-[#46474a] to-[#232426]' : 'bg-[#121214]'}">${b}</button>`).join('')}
          </div>
        </div>
      </div>`);

    const params = [['Quantize:', 'Off (5290)', 1], ['Q-Swing:', '-'], ['Q-Range:', '-', 1], ['Q-Strength:', '-'], ['Loop:', 'On'], ['Transpose:', 'B', 1], ['Delay:', '-', 1],
      ['Velocity:', '-'], ['Dynamics:', '-', 1], ['Gate Time:', '-', 1], ['Clip Length:', 'Off'], ['Score:', 'On']];
    el('paramList').innerHTML = params.map(([k, v, step], i) => `
      <div class="flex items-center h-[30px] pl-7 ${i % 2 ? 'mb-px border-2 border-[#76787a] bg-[#222326]' : 'border-2 border-[#1c1e20] bg-[#0f1112]'}">
        <label for="p${i}" class="w-[109px]">${k}</label>
        ${step ? `<select id="p${i}" class="appearance-none flex-1 bg-transparent outline-none"><option>${v}</option></select><svg class="w-[11px] h-[17px] mr-6"><use href="#updown"/></svg>`
               : `<input id="p${i}" value="${v}" class="flex-1 min-w-0 bg-transparent outline-none">`}
      </div>`).join('') + `
      <button class="flex items-center w-full h-[30px] pl-[42px] gap-2.5 bg-[#0f1112] border-t border-[#2c2e30]"><svg class="w-2 h-3"><use href="#chev-r"/></svg>Advanced Settings</button>
      <button class="flex items-center w-full h-[30px] pl-[42px] gap-2.5 bg-[#161719] border-t border-[#2c2e30]"><svg class="w-2 h-3"><use href="#chev-r"/></svg>Track:<span class="pl-1">Engine Ambient</span></button>`;

    // Tracks and clips. Clip positions are on a 0..1663 ruler.
    const SPAN = 1663;
    const pct = n => (n / SPAN * 100).toFixed(3) + '%';
    const badge = {
      gray: 'bg-[#6b6d70] border-[#6b6d70]', none: 'bg-[#202125] border-[#45464a]', sky: 'bg-[#55b5f5] border-[#55b5f5] text-[#cde9fc]', olive: 'bg-[#647f20] border-[#647f20]',
      rust: 'bg-[#9a4a28] border-[#9a4a28]', violet: 'bg-[#55467f] border-[#55467f]', mint: 'bg-[#4e9790] border-[#4e9790]', teal: 'bg-[#336f67] border-[#336f67]',
    };
    const clip = {
      gray: 'bg-[#707376] text-[#e0e0e0] pl-[7px]', indigo: 'bg-[#464da9] pl-3', ink: 'bg-[#211f3c] pl-2.5', green: 'bg-[#22dc43] text-[#10330f] pl-[7px]', orange: 'bg-[#fc7037] pl-[7px]',
      amber: 'bg-[#fc7037] pl-3.5', purple: 'bg-[#9170d8] pl-3', steel: 'bg-[#30546a] pl-3', sky: 'bg-[#55b8fa] text-[#0c2b42] pl-4', black: 'bg-black border border-[#2d2d2f] pl-3 text-white',
      mint: 'bg-[#70f0dd] text-[#0c302d] pl-2', coal: 'bg-[#242728] border border-[#313435] pl-2.5', teal: 'bg-[#316f65] pl-2', spn: 'bg-[#70f0dd] text-[#0c302d] pl-3', ext: 'bg-[#2a2b2e] text-[#a5a5a7] pl-3',
    };
    const repeat = (starts, w, kind, t) => starts.map(s => [s, s + w, kind, t]);
    const tracks = [
      ['B', 'gray', 'sfx . wheelSpin', [[190, 1545, 'gray', 'sfx_wheelSpin_A32-1']], { s: 1 }],
      ['T', 'none', '- - -', [], { off: 1 }],
      ['BAT', 'sky', 'sfx . drift', [[413, 876, 'indigo', 'sfx_drift_65G-86'], [1143, 1645, 'indigo', 'sfx_drift_65G-86']], { navy: 1, m: 'rust' }],
      ['O', 'sky', 'mix . bass', [[56, 123, 'ink indigo', 'Bass'], [307, 374, 'ink', 'Bass'], [558, 625, 'indigo', 'Bass'], [809, 876, 'ink', 'Bass'], [1059, 1400, 'indigo', 'Bass_05S-8066']]],
      ['RPP', 'olive', 'sfx . engine', [[0, 431, 'green', 'sfx_engine_lib02_041']], { s: 1, play: 'open' }],
      ['GLD', 'rust', 'sfx . engine', [[167, 909, 'orange', 'sfx_engine_lib02_041']], { s: 1 }],
      ['B2', 'violet', 'sfx . wheelSpin', [[725, 876, 'purple', 'sfx_wheelSpin_A12-2'], [1059, 1443, 'purple', 'sfx_wheelSpin_A05-9']], { navy: 1, s: 'deep' }],
      ['FM', 'none', 'lib . mono', [[725, 876, 'steel', 'Mono_U8'], [1059, 1443, 'steel', 'Mono_U8']]],
      ['AR', 'none', 'lib . mono', [[457, 725, 'sky', 'Mono_U4'], [993, 1260, 'sky', 'Mono_U4']], { s: 1 }],
      ['X1', 'rust', 'sfx . ambie', [[340, 608, 'amber', 'sfx_ambiance_lib04_h465-5803'], [876, 1143, 'amber', 'sfx_ambiance_lib04_h465-43403'], [1277, 1661, 'amber', 'sfx_ambiance_lib04_h465-7']], { s: 1 }],
      ['X2', 'none', 'sfx . zone', [[341, 607, 'black', 'sfx_zone_40859'], [876, 1111, 'black', 'sfx_zone_40859'], [1277, 1661, 'black', 'sfx_zone_40859a']], { play: 'full', cue: 1 }],
      ['B3', 'mint', 'sfx . crowd', [[69, 269, 'mint', 'sfx_crowd_R8-503B'], [1134, 1267, 'mint', 'sfx_crowd_R8-503B']]],
      ['B4', 'none', 'sfx . engine', [[190, 1662, 'coal', 'sfx_engine_lib05_239']], { navy: 1, s: 'green' }],
      ['5B', 'teal', 'sfx . crowd', [[1412, 1614, 'teal', 'sfx_track_020-2S']], { s: 1 }],
      ['T', 'teal', 'sfx . crowd', [[726, 928, 'teal', 'sfx_track_020-2D']], { s: 1 }],
      ['BAT', 'sky', '- - -', [], { off: 1 }],
      ['O', 'none', 'sfx . engine', [[82, 358, 'indigo', 'sfx_engine_lib05_fx431']], { navy: 1 }],
      ['RPP', 'none', 'lib . mix', repeat([190, 474, 758, 1043, 1327], 34, 'mx', 'mx'), { navy: 1, s: 1 }],
      ['GLD', 'none', 'lib . paths', repeat([320, 604, 888, 1173, 1457], 33, 'ink', 'P4'), { s: 1 }],
      ['B2', 'none', 'lib . spn', repeat([223, 507, 791, 1076, 1360], 56, 'spn', 'spn-2'), { s: 1 }],
      ['FM', 'gray', 'ext . output', repeat([32, 317, 601, 886, 1170], 61, 'ext', 'Ext'), { m: 'green', s: 'green' }],
    ];
    clip['ink indigo'] = clip.mx = 'bg-[#464da9] pl-2.5';
    const mBg = { undefined: 'bg-[#0a0a0b]', rust: 'bg-[#3b1a06]', green: 'bg-[#18403a]' };
    const sBg = { undefined: 'bg-[#151617]', 1: 'bg-[#242528]', deep: 'bg-[#0c2925]', green: 'bg-[#18403a]' };
    const playIcon = {
      open: '<svg class="w-4 h-3.5" viewBox="0 0 16 14"><path d="M1.500 1v12L14 7z" fill="none" stroke="#ccc" stroke-width="1.300"/></svg>',
      full: '<svg class="w-4 h-3.5" viewBox="0 0 16 14"><path d="M2 1v12l12-6z" fill="#70f0dd"/></svg>',
    };
    fill('trackList', tracks, ([b, c, name, , o = {}]) => `
      <div class="flex h-[26px] text-center">
        <div class="flex items-center w-[333px] h-[25px] pl-3 bg-gradient-to-b from-[#212022] to-[#131315] ${o.cue ? 'border-b border-[#58b8ae]' : ''}">
          <span class="w-[25px] h-6 leading-[22px] border rounded text-[10px] ${badge[c]}">${b}</span>
          <span class="ml-[19px] flex-1 text-left">${name}</span>
          ${playIcon[o.play] || ''}
          <span class="w-9"><svg class="w-[5px] h-2.5 mx-auto" viewBox="0 0 5 10" fill="none" stroke="#85868a"><path d="M4.500 0L3 3.500M4 4.500C1 4 0 9 2 9l2-1"/></svg></span>
        </div>
        <button class="w-7 h-[25px] ml-[3px] ${o.navy ? 'bg-[#111b2d]' : 'bg-[#3c6096]'}">A</button>
        <button class="w-[37px] h-[25px] ml-0.5 ${mBg[o.m]}">M</button>
        <button class="w-[33px] h-[25px] ml-0.5 ${sBg[o.s]}">S</button>
        <button class="flex-1 h-[25px] ml-0.5 bg-[#060607]">R</button>
      </div>`);

    fill('lanes', tracks, ([, , , clips, o = {}]) => `
      <div class="relative h-[26px] border-b ${o.cue ? 'border-[#58b8ae]' : 'border-black'} ${o.off ? 'bg-[#050505]' : 'bg-gradient-to-b from-[#1e1e20] to-[#131315]'}">
        ${clips.map(([s, e, k, t]) => `<div class="absolute top-[3px] h-5 flex items-center whitespace-nowrap text-[12px] ${clip[k]}" style="left:${pct(s)};width:${pct(e - s)}">${t}</div>`).join('')}
      </div>`);

    // Ruler: five ticks to every numbered bar
    fill('ruler', [...Array(124).keys()], k => `
      <span class="absolute bottom-0 w-px bg-[#6a6b6d] ${k % 5 ? 'h-[23px]' : 'h-[50px]'}" style="left:${pct(8.6 + k * 13.38)}"></span>
      ${k % 5 ? '' : `<span class="absolute top-1 pl-[3px]" style="left:${pct(8.6 + k * 13.38)}">${1 + k / 5 * 4}</span>`}`);

    const marks = [[71, 'V1', 'bg-[#6c6e73] text-[#d5d5d5]'], [340, 'CH1', 'bg-[#a0a3a5] text-[#d8d8d8]'], [608, 'V2', 'bg-[#2b2c31]'], [876, 'CH2', 'bg-[#112838]'], [1144, 'BR', 'bg-[#0f0f10]'], [1411, 'CH3', 'bg-[#2b2c31]']];
    fill('markers', marks, ([s, t, cls]) => `
      <div class="absolute top-0 h-[25px] pl-2.5 flex items-center text-[12px] ${cls} ${t === 'CH3' ? '' : '[clip-path:polygon(0_0,calc(100%-12px)_0,100%_50%,calc(100%-12px)_100%,0_100%)]'}" style="left:${pct(s)};width:${pct(t === 'CH3' ? 252 : 267)}">${t}</div>`);
    el('playhead').style.left = pct(461);
    el('playheadGrip').style.left = pct(456);

    // Menus and drop-downs of the two lower toolbars
    const menu = ([t, w]) => `<button class="flex items-center justify-between h-[30px] px-2 pr-3 bg-black border border-[#2d2f31] rounded-sm" style="width:${w}px">${t}<svg class="w-[14px] h-2.5"><use href="#chev"/></svg></button>`;
    fill('mixerMenus', [['Edit', 74], ['Functions', 119], ['View', 78]], menu);
    fill('lowerMenus', [['Config', 100], ['Windows', 119], ['Select', 96]], menu);
    const picker = (pre, w) => ([l, v]) => `
      <div class="flex items-center">
        <label for="${pre}${l}" style="width:${w}px">${l}:</label>
        <div class="relative">
          <select id="${pre}${l}" class="appearance-none w-[153px] h-[30px] pl-[14px] bg-black border border-[#2d2f31] rounded-sm outline-none"><option>${v}</option></select>
          <svg class="absolute right-2 top-1.5 w-[11px] h-[17px] pointer-events-none"><use href="#updown"/></svg>
        </div>
      </div>`;
    fill('mixerSelects', [['Snap', 'Smart'], ['Drag', 'Overlap'], ['View', 'Dials']], picker('top', 56));
    fill('lowerSelects', [['Select', 'All'], ['Drag', 'Overlap'], ['View', 'Timeline']], picker('low', 56));

    // Session mixer columns
    const hue = { gray: 'bg-[#5e5f63] text-[#dedede]', white: 'bg-[#eef3fc] text-[#222]', indigo: 'bg-[#474fac]', orange: 'bg-[#cf6030]', purple: 'bg-[#785bac]', olive: 'bg-[#7fa321]',
      mint: 'bg-[#5fc2b6]', blue: 'bg-[#4893cc]', green: 'bg-[#22ae3a]', none: 'bg-[#2d2d32]', lime: 'bg-[#a7d14a]', silver: 'bg-[#888a8f]', open: 'bg-[#222325] border border-[#4c4e50]' };
    // name, colour, four slots "text|fill|icon", beat, pie colour, pie start, count, gain, number, pan, meters, send A, send B
    const cols = [
      ['01 sfx', 'gray', ['01 R-2C', '04', '01 sfx|gray|play', '02 T A||tri'], 2, '#6a66f2', 0, 11, '-7.00', 1, -20, [39, 15], -55, -25],
      ['02 - - -', 'white', ['01 R-2C', '06', '02 - - - -|open|hollow', '05 J T'], 5, '', 0, 37, '1.50', 2, 15, [13, 12], 62, 25],
      ['03 sfx', 'indigo', ['01 R-2C', '02', '03 sfx|indigo|play', '07 H X'], 4, '#4a9bc8', 0, 41, '-6.00', 3, -25, [7, 5], -38, -28],
      ['04 mix', 'orange', ['04 R-2C', '01|orange', '04 mix|open|hollow', '03 V U'], 8, '#cb5f33', 0, 32, '-1.00', 4, 8, [25, 16], 40, -18],
      ['05 sfx', 'purple', ['01 R-2C|purple', '34', '05 sfx|purple|play', '01 F 5'], 2, '#9478d8', 190, 29, '-2.00', 5, 14, [14, 10], 10, -18],
      ['06 sfx', 'olive', ['02 R-2C', '04', '06 sfx|olive|play', '06 R G'], 4, '#8aa92e', 280, 12, '8.00', 7, 60, [20, 25], 70, 45],
      ['07 sfx', 'mint', ['01 R-2C|mint', '45', '07 sfx|mint', '03 N P|mint'], 1, '#5fc2b6', 0, 17, '7.00', 8, 38, [16, 12], -45, -20],
      ['08 lib', 'blue', ['12 R-2C', '33', '08 lib|silver', '08 D D'], 8, '#4893cc', 265, 52, '7.00', 9, 25, [10, 14], 3, -15],
      ['09 lib', 'mint', ['03 R-2C|mint', '55', '09 lib|silver|play', '14 Q S'], 6, '#5fc2b6', 0, 64, '-1.00', 10, -8, [12, 10], 22, 25],
      ['10 sfx', 'gray', ['02 R-2C', '22', '10 sfx|silver', '32 3 C'], 5, '', 0, 15, '4.00', 11, 32, [10, 44], -8, 28],
      ['11 sfx', 'green', ['04 R-2C', '22', '11 sfx|silver', '31 N T'], 9, '#25a83c', 235, 7, '-2.00', 12, -20, [10, 12], 8, -18],
      ['12 - - -', 'none', ['43 R-2C', '15', '12- - -|silver|play', '3 A Q'], 7, '', 0, 25, '3.00', 13, 22, [12, 14], 42, 0],
      ['13 sfx', 'mint', ['02 R-2C', '08', '13 sfx|mint|play', '12 R U'], 5, '#5fc2b6', 0, 32, '-3.00', 14, -18, [5, 4], 14, 38],
      ['14 sfx', 'olive', ['02 R-2C', '04', '14 sfx|olive|play', '01 F Q'], 8, '#84a028', 235, 55, '1.00', 15, 8, [23, 5], 0, -30],
      ['15 -sfx', 'indigo', ['02 R-2C|indigo', '05', '15sfx', '1 X R|indigo'], 2, '#5f5f64', 140, 17, '-3.00', 16, -10, [10, 16], 8, 42],
      ['16 lib', 'lime', ['01 R-2C|lime', '02', '16 libt|lime|play', '22 F Q'], 1, '#a7d14a', 0, 24, '4.00', 17, 24, [25, 12], -20, 8],
    ];
    const slotIcon = {
      undefined: '<span class="size-3 bg-black/15"></span>',
      play: '<svg class="size-3" viewBox="0 0 12 12"><path d="M0 0h12v12H0z" fill="#1b1d12"/><path d="M0 0v12l11-6z" fill="#b6f04c"/></svg>',
      hollow: '<svg class="w-[14px] h-[14px] -mr-0.5" viewBox="0 0 14 14"><path d="M1 1v12l12-6z" fill="none" stroke="#a6cf4c" stroke-width="1.300"/></svg>',
      tri: '<svg class="size-3" viewBox="0 0 12 12"><path d="M0 0v12l12-6z" fill="#232427"/></svg>',
    };
    const dial = (ring, needle, deg) => `<svg class="size-10" viewBox="0 0 40 40"><path d="M9 33A17 17 0 1 1 31 33" fill="none" stroke="${ring}" stroke-width="2"/><path d="M20 7l3.500 14a3.500 3.500 0 0 1-7 0z" fill="${needle}" transform="rotate(${deg} 20 20)"/></svg>`;
    const meter = (h, color) => `<div class="w-2 h-[149px] p-px bg-[#060607] border border-[#47494b] flex flex-col justify-end"><div class="${color}" style="height:${h}px"></div></div>`;
    const ticks = '<svg class="w-[6px] h-[150px] ml-[4px]" viewBox="0 0 6 150"><path d="M0 1h6M0 15h6M0 30h6M0 45h6M0 60h6M0 74h6M0 89h6M0 101h6M0 115h6M0 124h6M0 133h6M0 140h6M0 144h6M0 148h6" stroke="#85878a" stroke-width="1.500"/></svg>';

    fill('mixerCols', cols, ([name, color, slots, beat, pie, from, count, gain, num, pan, lv, a, b], i) => {
      const light = i % 2 === 0;
      const base = (i < 6 ? light : !light || i === 6) ? 'bg-[#2f3034]' : 'bg-[#232426]';
      return `
      <div class="pr-[3px]">
        <div class="grid gap-0.5">
          <button class="flex items-center justify-between h-6 px-[6px] ${hue[color]}">${name}<svg class="w-[14px] h-2.5 ${color === 'none' ? 'text-[#111]' : 'text-black'}"><use href="#chev"/></svg></button>
          ${slots.map(s => { const [t, f, ic] = s.split('|'); return `<button class="flex items-center gap-[14px] h-[23px] pl-[6px] ${f ? hue[f] : base}">${slotIcon[ic || undefined]}${t}</button>`; }).join('')}
          <div class="flex items-center h-[23px] pl-[6px] ${base}"><span class="size-3 bg-black/15"></span><span class="w-[35px] pl-[7px]">${beat}</span><span class="size-[15px] rounded-full border border-black/40" style="background:${pie ? `conic-gradient(from ${from}deg,#0a0a0b 22%,${pie} 0)` : '#08080a'}"></span><span class="pl-[4px]">${count}</span></div>
        </div>
        <div class="flex mt-[5px] h-[164px] pt-2 pl-[7px] ${light ? 'bg-gradient-to-b from-[#33353a] to-[#2d2f34]' : 'bg-[#242528]'}">
          <div class="w-[49px] flex flex-col items-center">
            <div class="w-[49px] h-[19px] leading-[17px] text-center bg-[#1b1c1e] border border-[#7c7e81] rounded-sm">${gain}</div>
            <div class="h-[43px] mt-[11px] mr-[5px]">${dial('#111214', light ? '#08090a' : '#e6e6e6', pan)}</div>
            <button class="w-[37px] h-[31px] border border-[#85878a] rounded-sm ${num === 2 || num === 13 ? 'bg-[#060607]' : ''}">${num}</button>
            <button class="w-[34px] h-4 leading-4 mt-[5px] bg-[#17181a]">S</button>
            <button class="size-[11px] mt-2.5 rounded-full border border-[#73908d] grid place-items-center" aria-label="Arm ${name}"><span class="size-[3px] rounded-full bg-[#7adfd0]"></span></button>
          </div>
          <div class="flex gap-[2px] ml-[7px]">${meter(lv[0], 'bg-[#76efe1]')}${meter(lv[1], 'bg-[#76efe1]')}${ticks}</div>
        </div>
        <div class="relative mt-[3px] h-[73px] bg-[#070708] border border-[#2c2e30] text-[12px]">
          <div class="absolute left-[8px] top-2">${dial('#5a5c5e', '#e6e6e6', a)}</div><span class="absolute left-[24px] top-[35px]">A</span>
          <div class="absolute right-[10px] top-[26px]">${dial('#2b2d2f', '#e6e6e6', b)}</div><span class="absolute right-[27px] top-[53px] text-[#77797b]">B</span>
        </div>
        <div class="h-[9px] bg-[#141516]"></div>
        <div class="h-[3px] bg-[#6b9d95]"></div>
      </div>`;
    });
    el('masterMeter').innerHTML = meter(28, 'bg-[#6fe0d4]') + meter(42, 'bg-[#4da0e8]') + ticks;
  </script>
</body>
</html>
